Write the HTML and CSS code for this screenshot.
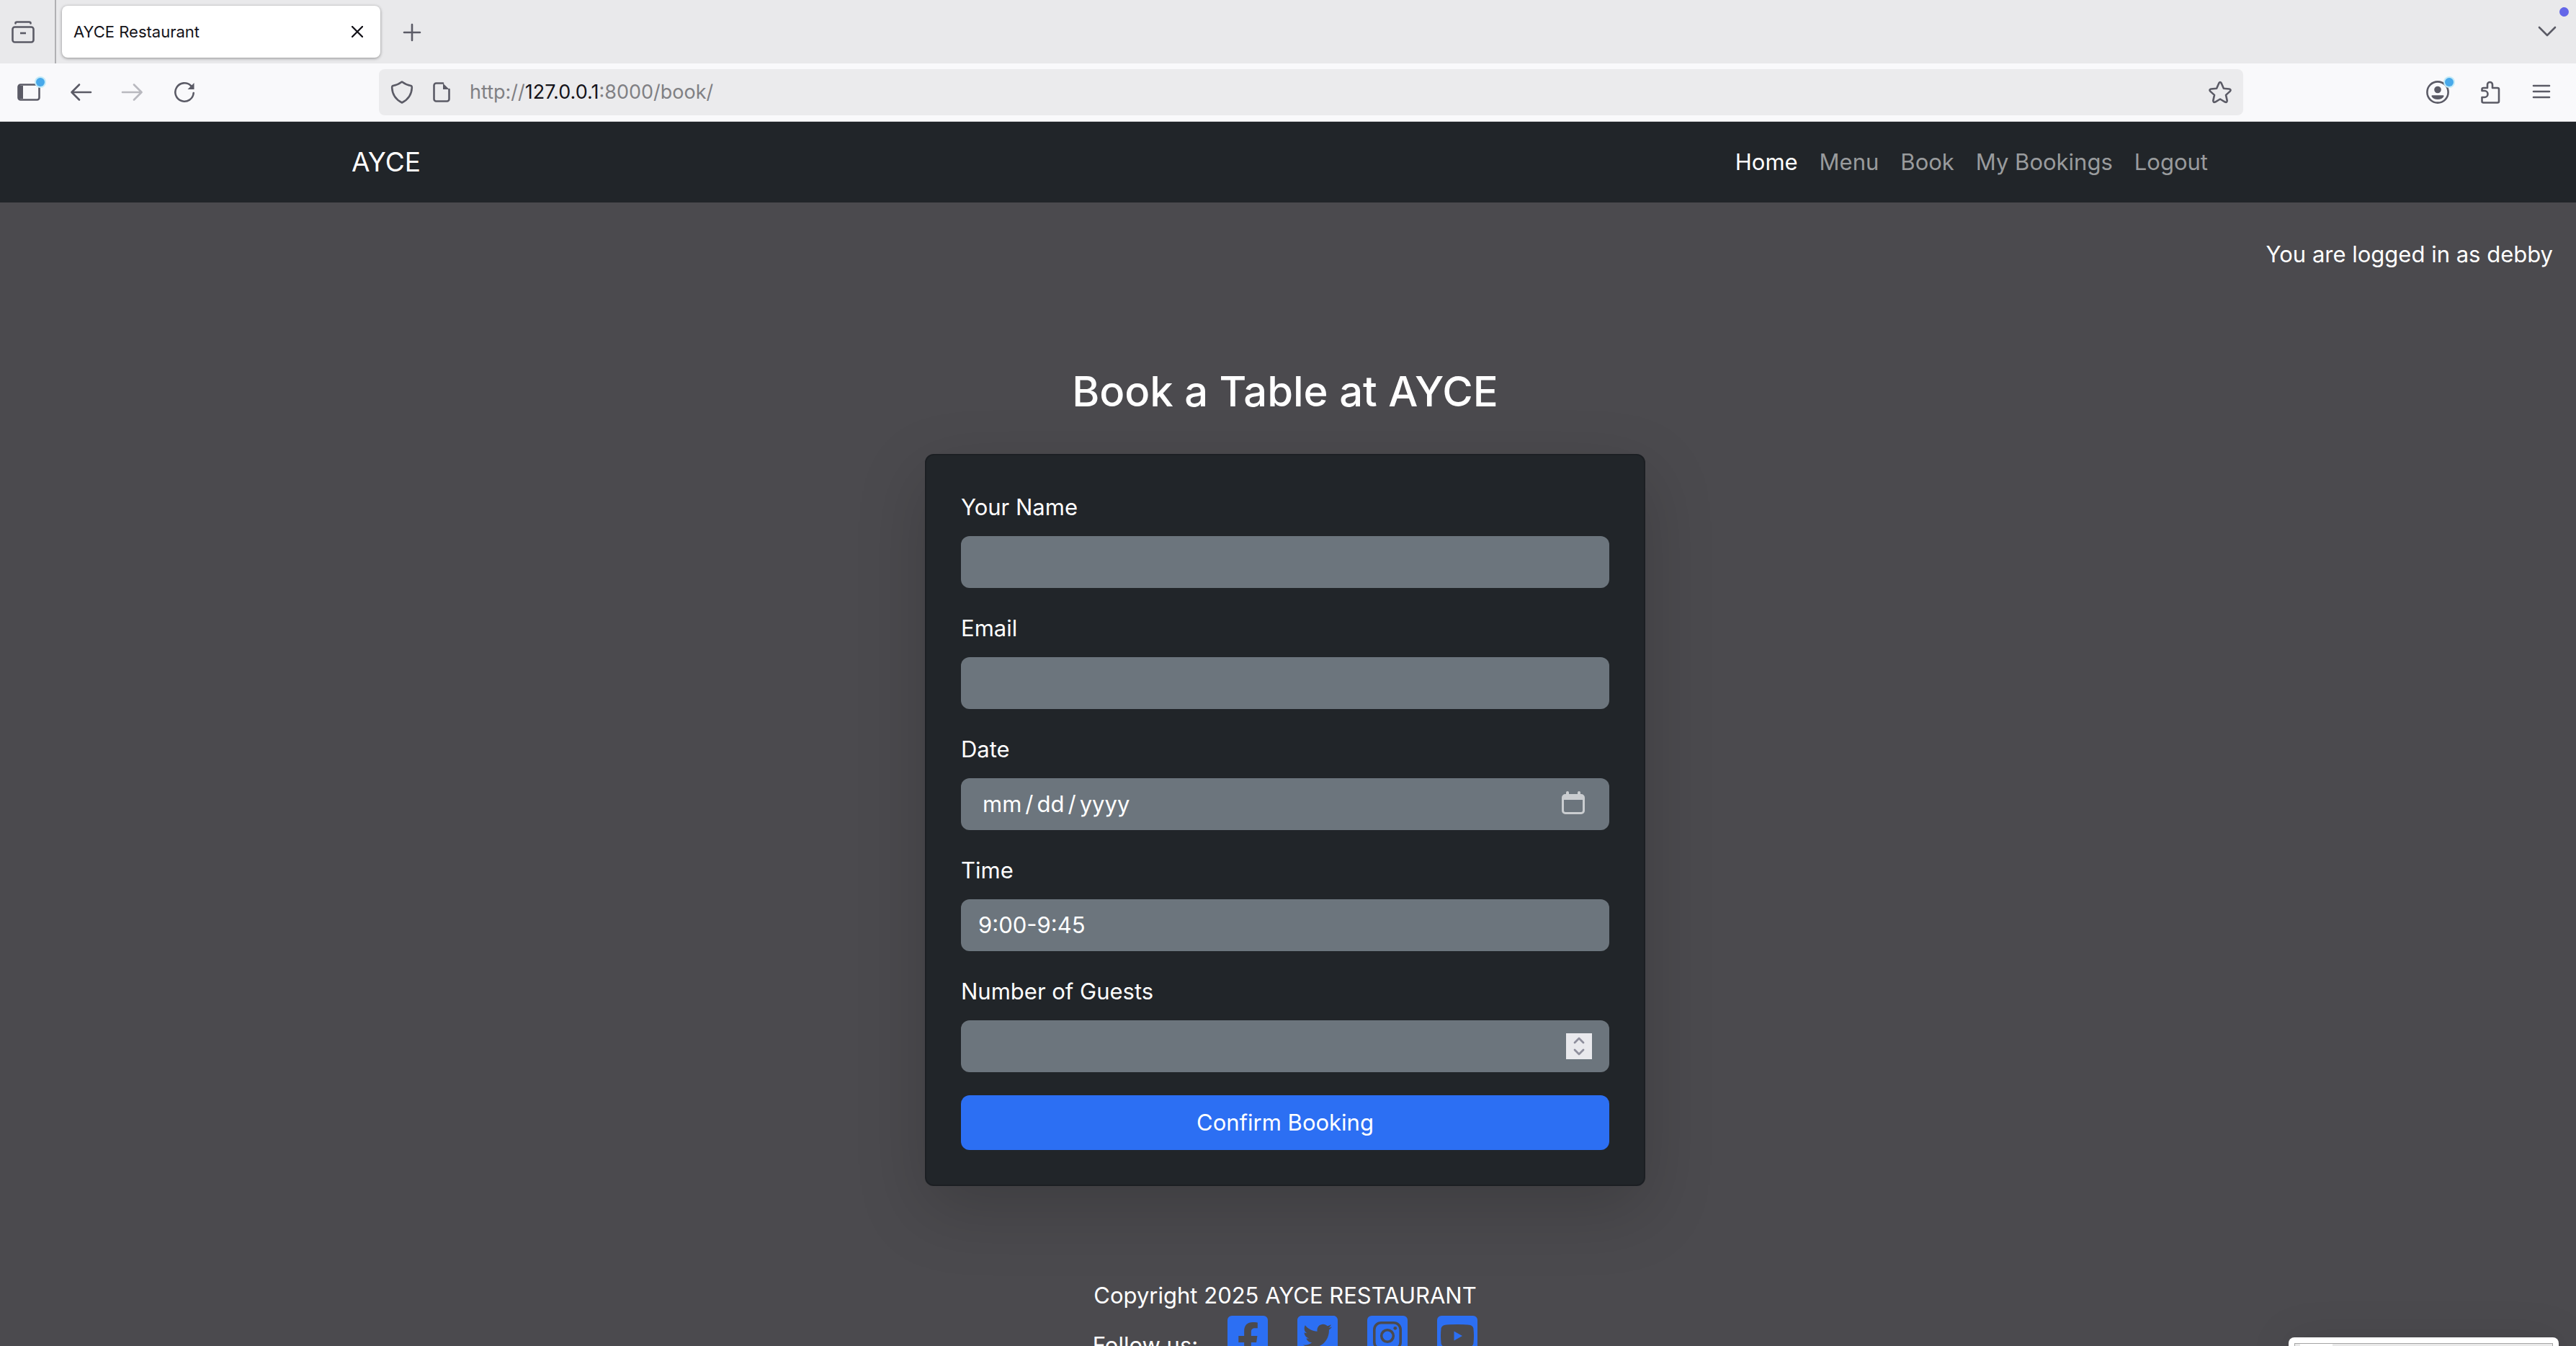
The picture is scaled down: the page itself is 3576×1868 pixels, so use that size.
FILE: index.html
```html
<!DOCTYPE html>
<html lang="en">
<head>
  <meta charset="utf-8">
  <meta name="viewport" content="width=device-width, initial-scale=1">
  <title>AYCE Restaurant</title>
  <link rel="stylesheet" href="styles.css">
</head>
<body class="window">

  <div class="tabstrip">
    <button class="icon-btn" type="button" aria-label="Recent browsing">
      <svg class="icon" viewBox="0 0 32 32"><rect x="1.5" y="9.5" width="29" height="21" rx="3"/><path d="M5.5 4.5V4Q5.5 2.5 7.5 2.5h17Q26.5 2.5 26.5 4v.5"/><path d="M12 18h8" stroke-linecap="butt"/></svg>
    </button>
    <span class="tabstrip-divider"></span>
    <div class="tab">
      <span class="tab-title">AYCE Restaurant</span>
      <button class="tab-close" type="button" aria-label="Close tab">
        <svg viewBox="0 0 16 16"><path d="M1 1l14 14M15 1L1 15"/></svg>
      </button>
    </div>
    <button class="icon-btn new-tab" type="button" aria-label="New tab">
      <svg class="icon" viewBox="0 0 32 32"><path d="M5 17h22M16 6v22"/></svg>
    </button>
    <button class="icon-btn list-tabs" type="button" aria-label="List all tabs">
      <svg class="icon" viewBox="0 0 32 32"><path d="M5 10l11 11 11-11"/></svg>
      <span class="notice-dot"></span>
    </button>
  </div>

  <div class="toolbar">
    <div class="tool-group">
      <button class="icon-btn" type="button" aria-label="Sidebar">
        <svg class="icon" viewBox="0 0 32 32"><rect x="1.5" y="5.5" width="29" height="21" rx="3"/><path class="solid" d="M1 7h7v18H1z"/><circle class="halo" cx="32" cy="2" r="8"/><circle class="dot" cx="32" cy="2" r="6"/></svg>
      </button>
      <button class="icon-btn" type="button" aria-label="Back">
        <svg class="icon" viewBox="0 0 32 32"><path d="M14 5.5L3.5 16 14 26.5M4 16h26"/></svg>
      </button>
      <button class="icon-btn faded" type="button" aria-label="Forward">
        <svg class="icon" viewBox="0 0 32 32"><path d="M18 5.5L28.5 16 18 26.5M28 16H2"/></svg>
      </button>
      <button class="icon-btn" type="button" aria-label="Reload">
        <svg class="icon" viewBox="0 0 32 32"><path d="M28.7 17A12.7 12.7 0 1 1 25 7"/><path class="solid" d="M29.5 3v9h-9z"/></svg>
      </button>
    </div>
    <div class="urlbar">
      <svg class="icon" viewBox="0 0 32 32"><path d="M16 1.5Q22 6 28.5 7Q30 7.5 29.8 10Q29 24 16 30.5Q3 24 2.2 10Q2 7.5 3.5 7Q10 6 16 1.5z"/></svg>
      <svg class="icon" viewBox="0 0 32 32"><path d="M18 3.5H8.5a3 3 0 0 0-3 3v19a3 3 0 0 0 3 3h15a3 3 0 0 0 3-3V12"/><path class="solid" d="M18 3.5v8.5h8.5z"/></svg>
      <span class="url">http://<b class="url-host">127.0.0.1</b>:8000/book/</span>
      <svg class="icon star" viewBox="0 0 32 32"><path d="M14.3 3.5q1.7-3 3.4 0l3.2 7.3 7.8.7q3 .7 1.1 3.1l-5.8 5.3 1.7 7.7q0 3-2.9 2L16 25.5l-6.8 4.1q-2.9 1-2.9-2L8 19.9l-5.8-5.3q-1.9-2.4 1.1-3.1l7.8-.7z"/></svg>
    </div>
    <div class="tool-group">
      <button class="icon-btn" type="button" aria-label="Account">
        <svg class="icon" viewBox="0 0 32 32"><circle cx="16" cy="16" r="14.6"/><circle class="solid" cx="16" cy="12.5" r="4.8"/><path class="solid" d="M8.5 20.2h15q1.5 0 1 1.5Q22 26 16 26T7.5 21.7q-.5-1.5 1-1.5z"/><circle class="halo" cx="32" cy="2" r="8"/><circle class="dot" cx="32" cy="2" r="6"/></svg>
      </button>
      <button class="icon-btn" type="button" aria-label="Extensions">
        <svg class="icon" viewBox="0 0 32 32"><path d="M5.5 13.5V12a2 2 0 0 1 2-2H13V5.5a3.5 3.5 0 0 1 7 0V10h7a2 2 0 0 1 2 2v16.5a2 2 0 0 1-2 2H7.5a2 2 0 0 1-2-2V23H9a4.5 4.5 0 0 0 0-9H5.5z"/></svg>
      </button>
      <button class="icon-btn" type="button" aria-label="Menu">
        <svg class="icon" viewBox="0 0 32 32"><path d="M5 7h22M5 15h22M5 23h22"/></svg>
      </button>
    </div>
  </div>

  <div class="page">
    <header class="navbar">
      <div class="container">
        <a class="brand" href="#">AYCE</a>
        <nav class="nav">
          <a class="nav-link active" href="#">Home</a>
          <a class="nav-link" href="#">Menu</a>
          <a class="nav-link" href="#">Book</a>
          <a class="nav-link" href="#">My Bookings</a>
          <a class="nav-link" href="#">Logout</a>
        </nav>
      </div>
    </header>

    <div class="content">
      <p class="login-status">You are logged in as debby</p>

      <main class="booking">
        <h1 class="title">Book a Table at AYCE</h1>
        <form class="card">
          <div class="field">
            <label for="name">Your Name</label>
            <input class="control" id="name" type="text">
          </div>
          <div class="field">
            <label for="email">Email</label>
            <input class="control" id="email" type="email">
          </div>
          <div class="field">
            <label for="date">Date</label>
            <div class="control-wrap">
              <input class="control" id="date" type="date">
              <svg class="calendar" viewBox="0 0 32 32"><path d="M6 2a2 2 0 0 1 4 0v2h12V2a2 2 0 0 1 4 0v2h1a5 5 0 0 1 5 5v18a5 5 0 0 1-5 5H5a5 5 0 0 1-5-5V9a5 5 0 0 1 5-5h1zM3 12v15a2 2 0 0 0 2 2h22a2 2 0 0 0 2-2V12z"/></svg>
            </div>
          </div>
          <div class="field">
            <label for="time">Time</label>
            <select class="control" id="time">
              <option>9:00-9:45</option>
            </select>
          </div>
          <div class="field">
            <label for="guests">Number of Guests</label>
            <div class="control-wrap">
              <input class="control" id="guests" type="number">
              <svg class="spinner" viewBox="0 0 36 36"><path d="M12 13l6-6 6 6M12 23l6 6 6-6"/></svg>
            </div>
          </div>
          <button class="submit" type="submit">Confirm Booking</button>
        </form>
      </main>

      <footer class="footer">
        <p class="copyright">Copyright 2025 AYCE RESTAURANT</p>
        <div class="social">
          <span class="social-label">Follow us:</span>
          <a href="#" aria-label="Facebook"><svg viewBox="0 32 448 448"><path d="M400 32H48A48 48 0 0 0 0 80v352a48 48 0 0 0 48 48h137.25V327.69h-63V256h63v-54.64c0-62.15 37-96.48 93.67-96.48 27.14 0 55.52 4.84 55.52 4.84v61h-31.27c-30.81 0-40.42 19.12-40.42 38.73V256h68.78l-11 71.69h-57.78V480H400a48 48 0 0 0 48-48V80a48 48 0 0 0-48-48z"/></svg></a>
          <a href="#" aria-label="Twitter"><svg viewBox="0 32 448 448"><path d="M400 32H48C21.5 32 0 53.5 0 80v352c0 26.5 21.5 48 48 48h352c26.5 0 48-21.5 48-48V80c0-26.5-21.5-48-48-48zm-48.9 158.8c.2 2.8.2 5.7.2 8.5 0 86.7-66 186.6-186.6 186.6-37.2 0-71.7-10.8-100.7-29.4 5.3.6 10.4.8 15.8.8 30.7 0 58.9-10.4 81.4-28-28.8-.6-53-19.5-61.3-45.5 10.1 1.5 19.2 1.5 29.6-1.2-30-6.1-52.5-32.5-52.5-64.4v-.8c8.7 4.9 18.9 7.9 29.6 8.3a65.447 65.447 0 0 1-29.2-54.6c0-12.2 3.2-23.4 8.9-33.1 32.3 39.8 80.8 65.8 135.2 68.6-9.3-44.5 24-80.6 64-80.6 18.9 0 35.9 7.9 47.9 20.7 14.8-2.8 29-8.3 41.6-15.8-4.9 15.2-15.2 28-28.8 36.1 13.2-1.4 26-5.1 37.8-10.2-8.9 13.1-20.1 24.7-32.9 34z"/></svg></a>
          <a href="#" aria-label="Instagram"><svg viewBox="0 0 56 56"><rect width="56" height="56" rx="6"/><rect class="cut" x="9.8" y="9.8" width="36.4" height="36.4" rx="9.5"/><circle class="cut" cx="28" cy="28" r="8.3"/><circle class="cut-fill" cx="38.8" cy="17.3" r="2.4"/></svg></a>
          <a href="#" aria-label="YouTube"><svg viewBox="0 0 56 56"><rect width="56" height="56" rx="6"/><path class="cut-fill" d="M28 12q13 0 18 1 3.7 1 4.4 4.5 1.2 10.5 0 21-.7 3.5-4.4 4.5-5 1-18 1t-18-1q-3.7-1-4.4-4.5-1.2-10.5 0-21Q6.3 14 10 13q5-1 18-1z"/><path d="M23.5 21.5L35 28l-11.5 6.5z"/></svg></a>
        </div>
      </footer>
    </div>
  </div>

  <aside class="preview" aria-hidden="true"><div class="preview-frame"><div class="preview-tab"></div></div></aside>
</body>
</html>
```
FILE: styles.css
```css
* {
  box-sizing: border-box;
}

body,
h1,
p {
  margin: 0;
}

button,
input,
select {
  font: inherit;
}

.window {
  display: flex;
  flex-direction: column;
  height: 100vh;
  overflow: hidden;
  background: #4b4a4e;
  color: #fff;
  font-family: Inter, "Liberation Sans", sans-serif;
  font-size: 31px;
  line-height: 48px;
}

/* Browser chrome */

.tabstrip {
  display: flex;
  flex: none;
  align-items: center;
  height: 88px;
  padding-right: 8px;
  background: #e9e9eb;
}

.icon-btn {
  position: relative;
  display: flex;
  flex: none;
  align-items: center;
  justify-content: center;
  width: 64px;
  height: 64px;
  padding: 0;
  border: 0;
  background: none;
}

.icon {
  flex: none;
  width: 32px;
  height: 32px;
  overflow: visible;
  fill: none;
  stroke: #5b5b66;
  stroke-width: 2.6;
  stroke-linecap: round;
  stroke-linejoin: round;
}

.icon .solid {
  fill: #5b5b66;
  stroke: none;
}

.icon .dot {
  fill: #48a9ea;
  stroke: none;
}

.icon .halo {
  fill: #c4ebf8;
  stroke: none;
}

.faded {
  opacity: 0.4;
}

.tabstrip-divider {
  flex: none;
  align-self: stretch;
  width: 2px;
  margin-left: 12px;
  background: #b0b0b3;
}

.tab {
  display: flex;
  flex: none;
  align-items: center;
  justify-content: space-between;
  width: 442px;
  height: 72px;
  margin-left: 8px;
  padding: 0 24px 0 16px;
  border-radius: 8px;
  background: #fff;
  box-shadow: 0 1px 4px rgba(0, 0, 0, 0.4);
}

.tab-title {
  color: #15141a;
  font-size: 22px;
}

.tab-close {
  display: flex;
  padding: 0;
  border: 0;
  background: none;
}

.tab-close svg {
  width: 16px;
  height: 16px;
  stroke: #15141a;
  stroke-width: 2.4;
  stroke-linecap: round;
}

.new-tab {
  margin-left: 12px;
}

.list-tabs {
  margin-left: auto;
}

.notice-dot {
  position: absolute;
  top: -2px;
  right: 2px;
  width: 13px;
  height: 13px;
  border-radius: 50%;
  background: #6366e8;
}

.toolbar {
  display: flex;
  flex: none;
  align-items: center;
  gap: 238px;
  height: 81px;
  padding: 0 16px 0 8px;
  border-bottom: 1px solid #d6d6d9;
  background: #f9f9fb;
}

.tool-group {
  display: flex;
  flex: none;
  gap: 8px;
}

.urlbar {
  display: flex;
  flex: 1;
  align-items: center;
  gap: 23px;
  height: 64px;
  padding: 0 16px;
  border-radius: 8px;
  background: #ebebed;
}

.url {
  color: #808084;
  font-size: 27px;
}

.url-host {
  color: #15141a;
  font-weight: 400;
}

.star {
  margin-left: auto;
}

/* Site */

.page {
  flex: 1;
  min-height: 0;
  overflow: hidden;
}

.navbar {
  padding-right: 8px;
  background: #212529;
}

.container {
  display: flex;
  align-items: center;
  justify-content: space-between;
  max-width: 2640px;
  height: 112px;
  margin: 0 auto;
  padding: 0 24px;
}

.brand {
  color: #fff;
  font-size: 37px;
  text-decoration: none;
}

.nav {
  display: flex;
}

.nav-link {
  padding: 16px 15px;
  color: #999b9d;
  text-decoration: none;
}

.nav-link.active {
  color: #fff;
}

.content {
  padding: 48px 8px 0 0;
}

.login-status {
  padding-right: 24px;
  text-align: right;
}

.booking {
  display: flex;
  flex-direction: column;
  align-items: center;
  gap: 48px;
  padding: 128px 24px;
}

.title {
  font-size: 58px;
  font-weight: 500;
  line-height: 77px;
}

.card {
  display: flex;
  flex-direction: column;
  gap: 32px;
  width: 100%;
  max-width: 1000px;
  padding: 48px;
  border: 2px solid #1c1f23;
  border-radius: 12px;
  background: #212529;
  box-shadow: 0 32px 96px rgba(0, 0, 0, 0.175);
}

.field {
  display: flex;
  flex-direction: column;
  gap: 16px;
}

.control-wrap {
  display: grid;
  align-items: center;
}

.control-wrap > * {
  grid-area: 1 / 1;
}

.control {
  width: 100%;
  height: 72px;
  padding: 0 24px;
  border: 0;
  border-radius: 12px;
  background: #6c757d;
  color: #fff;
  appearance: none;
}

.control[type="number"] {
  appearance: textfield;
}

.control::-webkit-calendar-picker-indicator {
  display: none;
}

.control::-webkit-datetime-edit-fields-wrapper {
  padding-left: 5px;
}

.control::-webkit-datetime-edit-text {
  padding: 0 4px;
}

.calendar {
  justify-self: end;
  width: 32px;
  height: 32px;
  margin: 0 34px 4px 0;
  fill: #cacdd0;
  pointer-events: none;
}

.spinner {
  justify-self: end;
  width: 36px;
  height: 36px;
  margin-right: 24px;
  background: #e9e9ed;
  fill: none;
  stroke: #8f8f9d;
  stroke-width: 2.8;
  stroke-linecap: round;
  stroke-linejoin: round;
  pointer-events: none;
}

.submit {
  height: 76px;
  padding: 0 24px;
  border: 0;
  border-radius: 12px;
  background: #2c6ff3;
  color: #fff;
}

.footer {
  text-align: center;
}

.social {
  display: flex;
  justify-content: center;
  gap: 41px;
  padding-top: 4px;
}

.social-label {
  padding-top: 17px;
}

.social svg {
  display: block;
  width: 56px;
  height: 56px;
  fill: #2c6ff3;
}

.social .cut {
  fill: none;
  stroke: #4b4a4e;
  stroke-width: 3.6;
}

.social .cut-fill {
  fill: #4b4a4e;
}

/* Preview window peeking over the bottom edge */

.preview {
  position: fixed;
  right: 24px;
  bottom: 0;
  width: 375px;
  height: 12px;
  padding: 8px 8px 0;
  border-radius: 8px 8px 0 0;
  background: #fff;
  box-shadow: 0 16px 64px rgba(0, 0, 0, 0.3);
}

.preview-frame {
  height: 4px;
  padding-left: 7px;
  border: 1px solid #a5a5a5;
  border-bottom: 0;
  background: #e9e9e9;
}

.preview-tab {
  width: 45px;
  height: 3px;
  background: #fff;
}
```
